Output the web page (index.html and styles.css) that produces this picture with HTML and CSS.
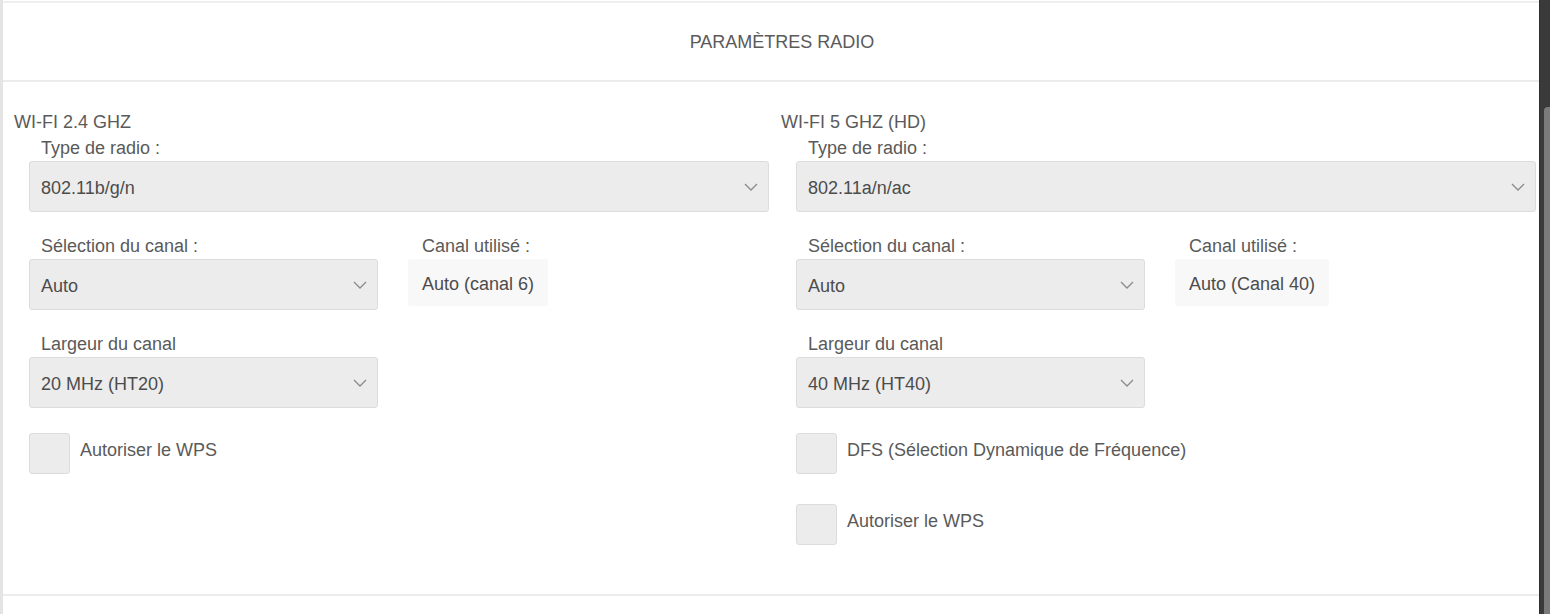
FILE: index.html
```html
<!DOCTYPE html>
<html>
<head>
  <meta charset="utf-8">
  <title>Paramètres radio</title>
  <link rel="stylesheet" href="styles.css">
</head>

<body>
  <div class="screen">
    <div class="page">
      <div class="header">PARAMÈTRES RADIO</div>

      <div class="bands">
        <div class="band">
          <div class="band-title">WI-FI 2.4 GHZ</div>
          <div class="fields">
            <div class="field">
              <label class="label">Type de radio :</label>
              <div class="select wide">
                <span>802.11b/g/n</span>
                <svg class="chevron" width="14" height="8" viewBox="0 0 14 8"><polyline points="1,1 7,7 13,1"/></svg>
              </div>
            </div>

            <div class="field-row">
              <div class="field">
                <label class="label">Sélection du canal :</label>
                <div class="select half">
                  <span>Auto</span>
                  <svg class="chevron" width="14" height="8" viewBox="0 0 14 8"><polyline points="1,1 7,7 13,1"/></svg>
                </div>
              </div>
              <div class="field">
                <label class="label used">Canal utilisé :</label>
                <div class="value">Auto (canal 6)</div>
              </div>
            </div>

            <div class="field">
              <label class="label">Largeur du canal</label>
              <div class="select half">
                <span>20 MHz (HT20)</span>
                <svg class="chevron" width="14" height="8" viewBox="0 0 14 8"><polyline points="1,1 7,7 13,1"/></svg>
              </div>
            </div>

            <div class="check-row">
              <span class="check"></span>
              <span class="check-label">Autoriser le WPS</span>
            </div>
          </div>
        </div>

        <div class="band">
          <div class="band-title">WI-FI 5 GHZ (HD)</div>
          <div class="fields">
            <div class="field">
              <label class="label">Type de radio :</label>
              <div class="select wide">
                <span>802.11a/n/ac</span>
                <svg class="chevron" width="14" height="8" viewBox="0 0 14 8"><polyline points="1,1 7,7 13,1"/></svg>
              </div>
            </div>

            <div class="field-row">
              <div class="field">
                <label class="label">Sélection du canal :</label>
                <div class="select half">
                  <span>Auto</span>
                  <svg class="chevron" width="14" height="8" viewBox="0 0 14 8"><polyline points="1,1 7,7 13,1"/></svg>
                </div>
              </div>
              <div class="field">
                <label class="label used">Canal utilisé :</label>
                <div class="value">Auto (Canal 40)</div>
              </div>
            </div>

            <div class="field">
              <label class="label">Largeur du canal</label>
              <div class="select half">
                <span>40 MHz (HT40)</span>
                <svg class="chevron" width="14" height="8" viewBox="0 0 14 8"><polyline points="1,1 7,7 13,1"/></svg>
              </div>
            </div>

            <div class="check-row">
              <span class="check"></span>
              <span class="check-label">DFS (Sélection Dynamique de Fréquence)</span>
            </div>

            <div class="check-row next">
              <span class="check"></span>
              <span class="check-label">Autoriser le WPS</span>
            </div>
          </div>
        </div>
      </div>
    </div>

    <div class="scrollbar">
      <div class="thumb"></div>
    </div>
  </div>
</body>
</html>
```

FILE: styles.css
```css
* {
  margin: 0;
  padding: 0;
  box-sizing: border-box;
}

html,
body {
  height: 100%;
  overflow: hidden;
}

body {
  font-family: "Liberation Sans", Arial, sans-serif;
  color: #5a5a5a;
  background: #fff;
}

.screen {
  display: flex;
  width: 1550px;
  height: 614px;
  overflow: hidden;
  background: #3a3a3a;
}

.page {
  flex: 0 0 1539px;
  background: #fff;
  border-left: 3px solid #e4e4e4;
}

.header {
  margin-top: 1px;
  height: 81px;
  padding-left: 22px;
  border-top: 2px solid #efefef;
  border-bottom: 2px solid #ebebeb;
  display: flex;
  align-items: center;
  justify-content: center;
  font-size: 18px;
  line-height: 20px;
}

.bands {
  display: grid;
  grid-template-columns: 767px 1fr;
  padding: 30px 0 49px 11px;
  border-bottom: 2px solid #ececec;
}

.band-title {
  font-size: 18px;
  line-height: 20px;
}

.fields {
  margin-top: 6px;
  padding-left: 15px;
}

.field-row {
  display: flex;
  gap: 30px;
}

.field-row,
.fields > .field + .field-row + .field {
  margin-top: 24px;
}

.label {
  display: block;
  padding-left: 12px;
  margin-bottom: 3px;
  font-size: 18px;
  line-height: 20px;
}

.label.used {
  padding-left: 14px;
}

.select {
  height: 51px;
  display: flex;
  align-items: center;
  justify-content: space-between;
  padding: 3px 10px 0 11px;
  background: #ececec;
  border: 1px solid #dcdcdc;
  border-radius: 3px;
  color: #4c4c4c;
  font-size: 18px;
}

.select .chevron {
  margin-top: -3px;
}

.wide {
  width: 740px;
}

.half {
  width: 349px;
}

.chevron polyline {
  fill: none;
  stroke: #8a8a8a;
  stroke-width: 1.3;
}

.value {
  display: flex;
  align-items: center;
  height: 47px;
  margin-top: 2px;
  padding: 3px 14px 0;
  background: #f8f8f8;
  border-radius: 3px;
  color: #4c4c4c;
  font-size: 18px;
}

.check-row {
  display: flex;
  gap: 10px;
  margin-top: 25px;
}

.check-row.next {
  margin-top: 30px;
}

.check {
  width: 41px;
  height: 41px;
  background: #ececec;
  border: 1px solid #dcdcdc;
  border-radius: 3px;
}

.check-label {
  padding-top: 7px;
  font-size: 18px;
  line-height: 20px;
}

.scrollbar {
  flex: 0 0 11px;
  display: flex;
  flex-direction: column;
  padding-left: 4px;
  background: #3a3a3a;
  border-left: 1px solid #2e2e2e;
}

.thumb {
  flex: 1;
  margin-top: 107px;
  background: #7b7b7b;
  border-radius: 4px 0 0 0;
}
```
